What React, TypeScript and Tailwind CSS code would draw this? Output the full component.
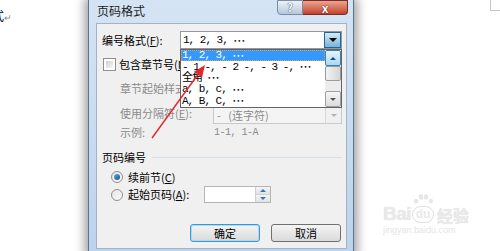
import React from 'react'

const listItems = ['1, 2, 3, ', '- 1 -, - 2 -, - 3 -, ', '全角 ', 'a, b, c, ', 'A, B, C, ']

function Dots() {
  return <span className="font-['DejaVu_Sans',sans-serif] text-[6px] tracking-[0.5px] align-middle">•••</span>
}

function Tri({ down = true, color = '#000', size = 4 }: { down?: boolean; color?: string; size?: number }) {
  return (
    <svg width={size * 2} height={size} viewBox="0 0 8 4">
      <path d={down ? 'M0 0h8L4 4z' : 'M0 4h8L4 0z'} fill={color} />
    </svg>
  )
}

function Radio({ on }: { on?: boolean }) {
  return (
    <div className="w-[12px] h-[12px] rounded-full border border-[#8e8f8f] bg-gradient-to-br from-[#e6e6e6] to-[#fafafa] flex items-center justify-center">
      {on && <div className="w-[6px] h-[6px] rounded-full bg-gradient-to-br from-[#5fb1e6] to-[#0b4f8e]" />}
    </div>
  )
}

function Btn({ label, focused }: { label: string; focused?: boolean }) {
  return (
    <div
      className={`w-[70px] h-[18px] rounded-[3px] border flex items-center justify-center text-[11px] text-black bg-gradient-to-b from-[#f4f4f4] to-[#dadada] ${
        focused ? 'border-[#3c98d4] shadow-[inset_0_0_0_1px_#a9dbf6]' : 'border-[#707070]'
      }`}
    >
      {label}
    </div>
  )
}

export default function App() {
  return (
    <div className="relative w-[500px] h-[251px] overflow-hidden bg-white font-['Noto_Sans_CJK_SC',sans-serif] flex pl-[88px]">
      {/* document behind the dialog */}
      <div className="absolute left-[-8px] top-[10px] flex items-end text-[12px] text-black leading-none">
        <span>式</span>
        <span className="text-[9px] text-[#888]">↵</span>
      </div>
      <div className="absolute left-[490px] top-0 w-[10px] h-[11px] border-l border-b border-[#c4c4c4]" />

      {/* dialog */}
      <div className="relative w-[266px] h-[256px] shrink-0 bg-gradient-to-b from-[#d5e4f4] to-[#bcd3ec] border-x border-b border-[#5e738c] shadow-[0_0_10px_3px_rgba(0,0,0,0.4)] flex flex-col">
        <div className="h-[23px] flex items-start justify-between pl-[8px] pr-[5px]">
          <div className="mt-[4px] text-[12px] leading-[14px] text-[#1b1b1b]">页码格式</div>
          <div className="flex h-[15px]">
            <div className="w-[26px] h-full rounded-bl-[4px] border border-[#7a8ca5] bg-gradient-to-b from-[#eef3f8] to-[#b7c7da] flex items-center justify-center text-[11px] font-bold text-white leading-none [text-shadow:0_0_1px_#3b4d63,0_0_1px_#3b4d63]">
              ?
            </div>
            <div className="w-[45px] h-full rounded-br-[4px] border border-l-0 border-[#7a2d22] bg-gradient-to-b from-[#e9a594] to-[#c2402a] flex items-center justify-center text-[12px] font-bold text-white leading-none [text-shadow:0_0_1px_#4a1409,0_0_1px_#4a1409]">
              x
            </div>
          </div>
        </div>

        {/* client */}
        <div className="ml-[7px] w-[251px] h-[226px] bg-[#f0f0f0] border border-[#9fb3c9] pt-[7px] pr-[4px] flex flex-col text-[11px] text-black">
          {/* 编号格式 */}
          <div className="flex items-center h-[18px] pl-[5px]">
            <div className="w-[78px] leading-none">
              编号格式(<span className="underline">F</span>):
            </div>
            <div className="relative w-[162px] h-[18px] bg-white border border-[#8e9aa8] flex">
              <div className="flex-1 pl-[2px] flex items-center font-['Liberation_Mono','Noto_Sans_CJK_SC',monospace] tracking-[-1px] whitespace-pre">
                1, 2, 3, <Dots />
              </div>
              <div className="w-[17px] h-full border border-[#2c628b] bg-gradient-to-b from-[#d2ecfa] to-[#76b3dc] flex items-center justify-center">
                <Tri />
              </div>
              {/* open list */}
              <div className="absolute z-10 left-[-1px] top-[17px] w-[162px] h-[59px] bg-white border border-[#646464] flex">
                <div className="flex-1 flex flex-col font-['Liberation_Mono','Noto_Sans_CJK_SC',monospace] tracking-[-1px] whitespace-pre">
                  {listItems.map((t, i) => (
                    <div
                      key={i}
                      className={`h-[11.4px] pl-[1px] flex items-center leading-none ${
                        i === 0 ? 'bg-[#3399ff] text-white outline-1 outline-dotted outline-[#e0a050] -outline-offset-1' : 'text-black'
                      }`}
                    >
                      {t}
                      <Dots />
                    </div>
                  ))}
                </div>
                <div className="w-[16px] flex flex-col bg-[#ececec]">
                  <div className="h-[16px] rounded-[2px] border border-[#3c7fb1] bg-gradient-to-b from-[#e6f5fd] to-[#a7d8f3] flex items-center justify-center">
                    <Tri down={false} color="#1c4a78" size={3} />
                  </div>
                  <div className="h-[15px] rounded-[2px] border border-[#9a9a9a] bg-gradient-to-r from-[#f2f2f2] to-[#d6d6d6]" />
                  <div className="flex-1" />
                  <div className="h-[16px] rounded-[2px] border border-[#a0a0a0] bg-gradient-to-b from-[#f6f6f6] to-[#dcdcdc] flex items-center justify-center">
                    <Tri color="#555" size={3} />
                  </div>
                </div>
              </div>
            </div>
          </div>

          {/* 包含章节号 */}
          <div className="mt-[9px] h-[13px] pl-[6px] flex items-center gap-[3px]">
            <div className="w-[13px] h-[13px] border border-[#8e8f8f] bg-white p-[2px]">
              <div className="w-full h-full bg-gradient-to-br from-[#d0d0d0] to-[#f6f6f6]" />
            </div>
            <div className="leading-none">
              包含章节号(<span className="underline">N</span>)
            </div>
          </div>

          <div className="mt-[9px] h-[17px] pl-[23px] flex items-center text-[#8b8b8b] leading-none">
            章节起始样式(<span className="underline">P</span>):
          </div>

          <div className="mt-[9px] h-[18px] pl-[23px] flex items-center text-[#8b8b8b]">
            <div className="w-[93px] leading-none -mt-[4px]">
              使用分隔符(<span className="underline">E</span>):
            </div>
            <div className="w-[129px] h-[17px] border border-[#c9c9c9] bg-[#f4f4f4] flex">
              <div className="flex-1 pl-[3px] flex items-center whitespace-pre leading-none">-   (连字符)</div>
              <div className="w-[16px] h-full border-l border-[#d8d8d8] bg-[#f0f0f0] flex items-center justify-center">
                <Tri color="#b3b3b3" size={3} />
              </div>
            </div>
          </div>

          <div className="mt-[2px] h-[13px] pl-[23px] flex items-center text-[#8b8b8b] leading-none">
            <div className="w-[94px]">示例:</div>
            <div className="font-['Liberation_Mono',monospace] text-[10px] tracking-[-0.5px] whitespace-pre">1-1, 1-A</div>
          </div>

          {/* 页码编号 group */}
          <div className="mt-[11px] h-[14px] pl-[5px] flex items-center gap-[6px]">
            <div className="leading-none">页码编号</div>
            <div className="flex-1 h-px bg-[#d5dfe5]" />
          </div>

          <div className="mt-[6px] h-[14px] pl-[14px] flex items-center gap-[5px]">
            <Radio on />
            <div className="leading-none">
              续前节(<span className="underline">C</span>)
            </div>
          </div>

          <div className="mt-[2px] h-[17px] pl-[14px] flex items-center">
            <Radio />
            <div className="w-[81px] pl-[5px] leading-none">
              起始页码(<span className="underline">A</span>):
            </div>
            <div className="w-[67px] h-[17px] border border-[#b5b5b5] bg-white flex justify-end">
              <div className="w-[15px] h-full flex flex-col border-l border-[#d0d0d0]">
                <div className="flex-1 bg-gradient-to-b from-[#f4f4f4] to-[#e2e2e2] border-b border-[#d0d0d0] flex items-center justify-center">
                  <Tri down={false} color="#3d75b0" size={3} />
                </div>
                <div className="flex-1 bg-gradient-to-b from-[#f4f4f4] to-[#e2e2e2] flex items-center justify-center">
                  <Tri color="#3d75b0" size={3} />
                </div>
              </div>
            </div>
          </div>

          <div className="mt-[21px] flex justify-end gap-[11px] pr-[1px]">
            <Btn label="确定" focused />
            <Btn label="取消" />
          </div>
        </div>
      </div>

      {/* red arrow annotation */}
      <svg className="absolute left-0 top-0 z-20 pointer-events-none" width="500" height="251">
        <line x1="152" y1="138" x2="199" y2="73" stroke="#e4262b" strokeWidth="1.4" />
        <path d="M205 65 L202 77.6 L193.9 71.8 Z" fill="#e4262b" />
      </svg>

      {/* watermark */}
      <div className="absolute left-[383px] top-[203px] flex flex-col items-start text-[#e9e9e9]">
        <div className="flex items-end gap-[1px] leading-none">
          <span className="font-['Liberation_Sans',sans-serif] font-bold text-[19px] tracking-[-0.5px] [text-shadow:0_0_1px_#dadada]">Bai</span>
          <span className="relative">
            <svg className="absolute left-[1px] -top-[9px]" width="20" height="10" viewBox="0 0 20 10">
              <ellipse cx="3" cy="7" rx="2.2" ry="2.6" fill="#e6e6e6" />
              <ellipse cx="8" cy="3" rx="2.2" ry="2.8" fill="#e6e6e6" />
              <ellipse cx="13" cy="3" rx="2.2" ry="2.8" fill="#e6e6e6" />
              <ellipse cx="18" cy="7" rx="2" ry="2.6" fill="#e6e6e6" />
            </svg>
            <span className="inline-flex items-center justify-center w-[22px] h-[17px] rounded-[9px] border border-[#dedede] font-['Liberation_Sans',sans-serif] font-bold text-[12px]">
              du
            </span>
          </span>
          <span className="text-[16px] font-bold ml-[2px] [text-shadow:0_0_1px_#dadada]">经验</span>
        </div>
        <div className="mt-[3px] font-['Liberation_Sans',sans-serif] text-[9px] leading-none text-[#e4e4e4]">jingyan.baidu.com</div>
      </div>
    </div>
  )
}
